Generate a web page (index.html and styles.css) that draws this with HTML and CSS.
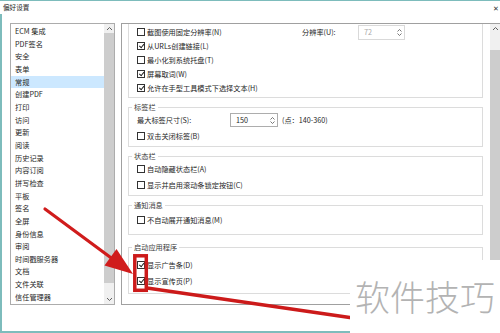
FILE: index.html
```html
<!DOCTYPE html>
<html>
<head>
    <meta charset="UTF-8">
    <title>偏好设置</title>
    <link rel="stylesheet" href="styles.css">
</head>
<body>
<div class="window">
    <div class="titlebar">
        <span class="title">偏好设置</span>
        <span class="close">✕</span>
    </div>

    <div class="frame">
        <!--左侧分类列表-->
        <div class="nav">
            <ul class="navList">
                <li>ECM 集成</li>
                <li>PDF签名</li>
                <li>安全</li>
                <li>表单</li>
                <li class="active">常规</li>
                <li>创建PDF</li>
                <li>打印</li>
                <li>访问</li>
                <li>更新</li>
                <li>阅读</li>
                <li>历史记录</li>
                <li>内容订阅</li>
                <li>拼写检查</li>
                <li>平板</li>
                <li>签名</li>
                <li>全屏</li>
                <li>身份信息</li>
                <li>审阅</li>
                <li>时间戳服务器</li>
                <li>文档</li>
                <li>文件关联</li>
                <li>信任管理器</li>
            </ul>
            <div class="scrollbar">
                <i class="arrow"><svg width="7" height="5" viewBox="0 0 7 5"><path d="M1 4L3.5 1.5L6 4" fill="none" stroke="#606060"/></svg></i>
                <i class="thumb"></i>
                <i class="arrow down"><svg width="7" height="5" viewBox="0 0 7 5"><path d="M1 1L3.5 3.5L6 1" fill="none" stroke="#606060"/></svg></i>
            </div>
        </div>

        <!--右侧设置内容-->
        <div class="panel">
            <div class="content">
                <fieldset class="group first">
                    <div class="row">
                        <label class="check wide"><span class="cb"></span>截图使用固定分辨率(N)</label>
                        <span class="lbl resLbl">分辨率(U):</span>
                        <span class="spin res">72
                            <span class="arrows">
                                <svg width="5" height="3" viewBox="0 0 5 3"><path d="M0.5 2.5L2.5 0.5L4.5 2.5" fill="none" stroke="#555" stroke-width="0.8"/></svg>
                                <svg width="5" height="3" viewBox="0 0 5 3"><path d="M0.5 0.5L2.5 2.5L4.5 0.5" fill="none" stroke="#555" stroke-width="0.8"/></svg>
                            </span>
                        </span>
                    </div>
                    <div class="row"><label class="check"><span class="cb on"></span>从URLs创建链接(L)</label></div>
                    <div class="row"><label class="check"><span class="cb"></span>最小化到系统托盘(T)</label></div>
                    <div class="row"><label class="check"><span class="cb on"></span>屏幕取词(W)</label></div>
                    <div class="row"><label class="check"><span class="cb on"></span>允许在手型工具模式下选择文本(H)</label></div>
                </fieldset>

                <fieldset class="group">
                    <legend>标签栏</legend>
                    <div class="row">
                        <span class="lbl sizeLbl">最大标签尺寸(S):</span>
                        <span class="spin size">150
                            <span class="arrows">
                                <svg width="5" height="3" viewBox="0 0 5 3"><path d="M0.5 2.5L2.5 0.5L4.5 2.5" fill="none" stroke="#555" stroke-width="0.8"/></svg>
                                <svg width="5" height="3" viewBox="0 0 5 3"><path d="M0.5 0.5L2.5 2.5L4.5 0.5" fill="none" stroke="#555" stroke-width="0.8"/></svg>
                            </span>
                        </span>
                        <span class="hint">(点：140-360)</span>
                    </div>
                    <div class="row"><label class="check"><span class="cb"></span>双击关闭标签(B)</label></div>
                </fieldset>

                <fieldset class="group">
                    <legend>状态栏</legend>
                    <div class="row"><label class="check"><span class="cb"></span>自动隐藏状态栏(A)</label></div>
                    <div class="row"><label class="check"><span class="cb"></span>显示并启用滚动条锁定按钮(C)</label></div>
                </fieldset>

                <fieldset class="group notice">
                    <legend>通知消息</legend>
                    <div class="row"><label class="check"><span class="cb"></span>不自动展开通知消息(M)</label></div>
                </fieldset>

                <fieldset class="group startup">
                    <legend>启动应用程序</legend>
                    <div class="row"><label class="check"><span class="cb on"></span>显示广告条(D)</label></div>
                    <div class="row"><label class="check"><span class="cb on"></span>显示宣传页(P)</label></div>
                </fieldset>
            </div>
            <div class="scrollbar">
                <i class="arrow"><svg width="7" height="5" viewBox="0 0 7 5"><path d="M1 4L3.5 1.5L6 4" fill="none" stroke="#606060"/></svg></i>
                <i class="thumb"></i>
            </div>
        </div>
    </div>
</div>

<!--截图上的红色标注-->
<svg class="marks" width="500" height="333" viewBox="0 0 500 333">
    <line x1="45" y1="209" x2="114" y2="260" stroke="#d01c1c" stroke-width="3.2" stroke-linecap="round"/>
    <polygon points="133,274 104.5,265.5 116.5,249" fill="#d01c1c"/>
    <rect x="134.8" y="255.8" width="11.5" height="34.5" fill="none" stroke="#cc1a1a" stroke-width="3.5"/>
    <line x1="147" y1="288" x2="360" y2="319" stroke="#cc1a1a" stroke-width="3.5"/>
</svg>

<div class="watermark">软件技巧</div>
</body>
</html>
```

FILE: styles.css
```css
* {
    margin: 0;
    padding: 0;
    box-sizing: border-box;
}

html, body {
    width: 500px;
    height: 333px;
    overflow: hidden;
    background: #fff;
}

body {
    position: relative;
    font-family: "Noto Sans CJK SC", "Noto Sans", sans-serif;
    font-size: 7.2px;
    color: #262626;
}

ul {
    list-style: none;
}

i {
    display: block;
}

/*窗口外框*/
.window {
    display: flex;
    flex-direction: column;
    height: 333px;
}

.titlebar {
    display: flex;
    justify-content: space-between;
    align-items: center;
    height: 14px;
    padding-left: 3px;
    border-top: 1px solid #7dbcbc;
}

.titlebar .title {
    font-size: 6.6px;
    line-height: 13px;
}

.titlebar .close {
    margin-right: 1px;
    font-size: 7px;
    color: #333;
}

.frame {
    flex: 1;
    display: flex;
    align-items: flex-start;
    padding: 9px 0 0 8px;
    border-left: 2px solid #7dbcbc;
    border-bottom: 2px solid #7dbcbc;
}

/*左侧列表*/
.nav {
    display: flex;
    flex-shrink: 0;
    width: 105px;
    height: 282px;
    border: 1px solid #acacac;
}

.navList {
    flex: 1;
    padding-top: 1px;
}

.navList li {
    height: 12.67px;
    line-height: 12.67px;
    padding-left: 4px;
    white-space: nowrap;
}

.navList li.active {
    background: #cce8ff;
}

.scrollbar {
    display: flex;
    flex-direction: column;
    width: 10px;
    background: #f0f0f0;
}

.scrollbar .arrow {
    display: flex;
    align-items: center;
    justify-content: center;
    height: 9px;
}

.scrollbar .arrow.down {
    height: 10px;
    margin-top: auto;
}

.scrollbar .thumb {
    height: 250px;
    background: #cdcdcd;
}

/*右侧面板*/
.panel {
    display: flex;
    flex-shrink: 0;
    width: 380px;
    height: 282px;
    margin-left: 6px;
    border: 1px solid #a0a0a0;
}

.panel .scrollbar .thumb {
    height: 240px;
    margin-top: 17px;
}

.content {
    width: 368px;
    height: 280px;
    overflow: hidden;
}

.group {
    min-width: 0;
    margin: 4px 7px 0 6px;
    padding: 0 0 2px;
    border: 1px solid #dcdcdc;
}

.group legend {
    margin-left: 3px;
    padding: 0 2px;
    line-height: 10px;
    color: #3c3c3c;
}

.group.first {
    margin-top: 0;
    padding: 1px 0 2px;
    border-top: 0;
}

.group.notice {
    padding: 2px 0 6px;
}

.group.startup {
    margin-top: 7px;
    padding: 5px 0 4px;
}

.row {
    display: flex;
    align-items: center;
    height: 16px;
    padding-left: 8px;
    white-space: nowrap;
}

.first .row {
    height: 14px;
}

.check {
    display: flex;
    align-items: center;
}

.check.wide {
    width: 165px;
}

.cb {
    position: relative;
    flex-shrink: 0;
    width: 8px;
    height: 8px;
    margin-right: 2px;
    border: 1px solid #333;
    background: #fff;
}

.cb.on::after {
    content: "";
    position: absolute;
    left: 1.6px;
    top: 0;
    width: 2.4px;
    height: 4.4px;
    border: solid #222;
    border-width: 0 1px 1px 0;
    transform: rotate(40deg);
}

.resLbl {
    width: 56px;
}

.sizeLbl {
    width: 93px;
}

.spin {
    display: flex;
    align-items: center;
    justify-content: space-between;
    height: 14px;
    padding: 0 2px 0 5px;
    border: 1px solid #adadad;
    background: #fff;
}

.spin.res {
    width: 47px;
    height: 15px;
    border-color: #d9d9d9;
    color: #a8a8a8;
}

.spin.size {
    width: 48px;
}

.spin .arrows {
    display: flex;
    flex-direction: column;
    gap: 1px;
}

.spin .arrows svg {
    display: block;
}

.hint {
    margin-left: 4px;
}

/*标注与水印*/
.marks {
    position: absolute;
    left: 0;
    top: 0;
    pointer-events: none;
}

.watermark {
    position: absolute;
    left: 350px;
    top: 260px;
    width: 150px;
    height: 73px;
    padding: 16px 0 0 5px;
    background: #fff;
    font-size: 35px;
    line-height: 40px;
    font-weight: 300;
    color: #b3b3b3;
    white-space: nowrap;
}
```
